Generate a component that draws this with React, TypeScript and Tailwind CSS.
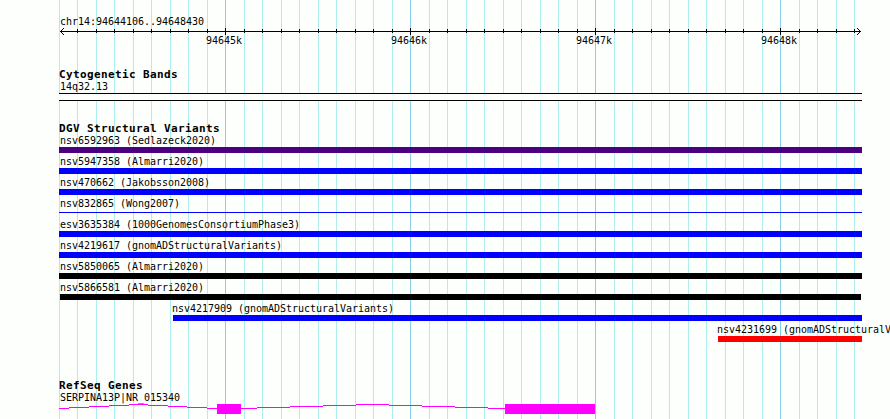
type Variant = {
  id: string;
  study: string;
  start: number;
  end: number;
  bar: string;
};

// start / end are pixels from the left edge of the browser panel
const variants: Variant[] = [
  { id: 'nsv6592963', study: 'Sedlazeck2020', start: 0, end: 803, bar: 'h-1.5 bg-[#4b0082]' },
  { id: 'nsv5947358', study: 'Almarri2020', start: 0, end: 803, bar: 'h-1.5 bg-[#0000ff]' },
  { id: 'nsv470662', study: 'Jakobsson2008', start: 0, end: 803, bar: 'h-1.5 bg-[#0000ff]' },
  { id: 'nsv832865', study: 'Wong2007', start: 0, end: 803, bar: 'h-px mt-0.5 bg-[#0000ff]' },
  { id: 'esv3635384', study: '1000GenomesConsortiumPhase3', start: 0, end: 803, bar: 'h-1.5 bg-[#0000ff]' },
  { id: 'nsv4219617', study: 'gnomADStructuralVariants', start: 0, end: 803, bar: 'h-1.5 bg-[#0000ff]' },
  { id: 'nsv5850065', study: 'Almarri2020', start: 0, end: 803, bar: 'h-1.5 bg-black' },
  { id: 'nsv5866581', study: 'Almarri2020', start: 1, end: 802, bar: 'h-1.5 bg-black' },
  { id: 'nsv4217909', study: 'gnomADStructuralVariants', start: 114, end: 803, bar: 'h-1.5 bg-[#0000ff]' },
  { id: 'nsv4231699', study: 'gnomADStructuralVariants', start: 659, end: 803, bar: 'h-1.5 bg-[#ff0000]' },
];

// one line every 100 bases, every tenth is a full kilobase
const gridLines = Array.from({ length: 44 }, (_, i) => ({
  x: Math.floor(i * 18.5),
  major: i % 10 === 9,
}));

const kilobases = ['94645k', '94646k', '94647k', '94648k'];

// [from, to, y] pieces of the intron line
const introns = [
  [0, 10, 4], [10, 30, 3], [30, 50, 2], [50, 70, 1], [70, 89, 0],
  [89, 109, 1], [109, 128, 2], [128, 148, 3], [148, 158, 4],
  [182, 198, 4], [198, 231, 3], [231, 264, 2], [264, 297, 1], [297, 330, 0],
  [330, 363, 1], [363, 396, 2], [396, 429, 3], [429, 446, 4],
];

function Grid() {
  return (
    <svg className="absolute inset-0" width="890" height="419" shapeRendering="crispEdges">
      {gridLines.map(({ x, major }) => (
        <rect key={x} x={x + 59} y={0} width={1} height={419} fill={major ? '#87ceeb' : '#afeeee'} />
      ))}
    </svg>
  );
}

function Ruler() {
  return (
    <svg className="block" width="803" height="7" shapeRendering="crispEdges">
      <rect x={1} y={3} width={801} height={1} />
      {gridLines.slice(1).map(({ x, major }) => (
        <rect key={x} x={x} y={major ? 0 : 1} width={1} height={major ? 7 : 4} />
      ))}
      <path d="M2 2h1v1h-1zM3 1h1v1h-1zM4 0h1v1h-1zM2 4h1v1h-1zM3 5h1v1h-1zM4 6h1v1h-1z" />
      <path d="M800 2h1v1h-1zM799 1h1v1h-1zM798 0h1v1h-1zM800 4h1v1h-1zM799 5h1v1h-1zM798 6h1v1h-1z" />
    </svg>
  );
}

function TrackTitle({ children }: { children: string }) {
  return (
    <h2 className="h-[13px] pt-px whitespace-pre text-[11px] leading-3 font-bold tracking-[0.378px]">{children}</h2>
  );
}

export default function App() {
  return (
    <div className="relative h-[419px] w-[890px] overflow-hidden bg-[#fdfffc] font-['DejaVu_Sans_Mono',monospace] text-[10px] leading-3 tracking-[-0.02px] text-black">
      <Grid />

      <main className="relative flex flex-col pl-[59px]">
        <section className="pt-4">
          <div className="h-3 pl-px">chr14:94644106..94648430</div>
          <Ruler />
          <div className="flex gap-[149px] pl-[147px]">
            {kilobases.map((label) => (
              <span key={label} className="w-9 whitespace-nowrap">{label}</span>
            ))}
          </div>
        </section>

        <section className="pt-[21px]">
          <TrackTitle>Cytogenetic Bands</TrackTitle>
          <div className="h-3 pl-px">14q32.13</div>
          <div className="h-2 w-[803px] border-y border-black bg-[#fdfffc]" />
        </section>

        <section className="pt-[21px]">
          <TrackTitle>DGV Structural Variants</TrackTitle>
          {variants.map(({ id, study, start, end, bar }) => (
            <div key={id} className="flex h-[21px] flex-col" style={{ paddingLeft: start }}>
              <div className={`h-3 whitespace-nowrap ${start === 0 ? 'pl-px' : start > 1 ? '-ml-px' : ''}`}>
                {id} ({study})
              </div>
              <div className={bar} style={{ width: end - start }} />
            </div>
          ))}
        </section>

        <section className="pt-[34px]">
          <TrackTitle>RefSeq Genes</TrackTitle>
          <div className="h-3 pl-px">SERPINA13P|NR_015340</div>
          <svg className="block" width="803" height="10" fill="#ff00ff" shapeRendering="crispEdges">
            {introns.map(([from, to, y]) => (
              <rect key={from} x={from} y={y} width={to - from} height={1} />
            ))}
            <rect x={158} y={0} width={24} height={10} />
            <rect x={446} y={0} width={90} height={10} />
          </svg>
        </section>
      </main>
    </div>
  );
}
